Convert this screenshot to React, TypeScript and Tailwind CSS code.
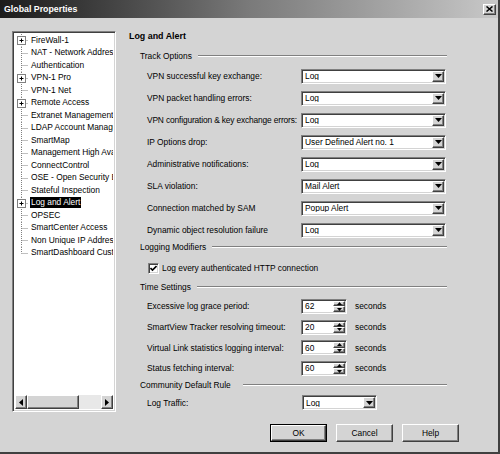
import React from "react";

const raised =
  "bg-[#d4d4d4] border border-t-white border-l-white border-b-[#404040] border-r-[#404040] shadow-[inset_-1px_-1px_0_#808080]";
const sunken =
  "bg-white border border-t-[#808080] border-l-[#808080] border-b-white border-r-white shadow-[inset_1px_1px_0_#404040,inset_-1px_-1px_0_#d4d4d4]";

function Tri({ dir }: { dir: "down" | "up" | "left" | "right" }) {
  const d =
    dir === "down"
      ? "M0 0H7L3.5 4Z"
      : dir === "up"
      ? "M0 4H7L3.5 0Z"
      : dir === "left"
      ? "M4 0V7L0 3.5Z"
      : "M0 0V7L4 3.5Z";
  const w = dir === "down" || dir === "up" ? 7 : 4;
  const h = dir === "down" || dir === "up" ? 4 : 7;
  return (
    <svg width={w} height={h} viewBox={`0 0 ${w} ${h}`}>
      <path d={d} fill="#000" />
    </svg>
  );
}

function Select({ value, wide = true }: { value: string; wide?: boolean }) {
  return (
    <div className={`${wide ? "w-[145px]" : "w-[75px]"} h-[15px] shrink-0 flex items-center p-[1px] ${sunken}`}>
      <span className="flex-1 pl-[2px] leading-none whitespace-nowrap overflow-hidden">{value}</span>
      <div className={`w-[12px] h-[11px] flex items-center justify-center ${raised}`}>
        <Tri dir="down" />
      </div>
    </div>
  );
}

function Spinner({ value }: { value: string }) {
  return (
    <div className={`w-[46px] h-[15px] shrink-0 flex items-center p-[1px] ${sunken}`}>
      <span className="flex-1 pl-[2px] leading-none">{value}</span>
      <div className="w-[12px] h-[11px] flex flex-col">
        <div className={`flex-1 flex items-center justify-center ${raised}`}>
          <svg width="5" height="3" viewBox="0 0 5 3"><path d="M0 3H5L2.5 0Z" fill="#000" /></svg>
        </div>
        <div className={`flex-1 flex items-center justify-center ${raised}`}>
          <svg width="5" height="3" viewBox="0 0 5 3"><path d="M0 0H5L2.5 3Z" fill="#000" /></svg>
        </div>
      </div>
    </div>
  );
}

function Group({ title, gap = "ml-[6px]" }: { title: string; gap?: string }) {
  return (
    <div className="flex items-center h-[12px] pl-[11px] w-[318px]">
      <span className="whitespace-nowrap leading-none">{title}</span>
      <div className={`flex-1 ${gap} h-[2px] border-t border-t-[#808080] border-b border-b-white`} />
    </div>
  );
}

const treeItems: { label: string; plus?: boolean; sel?: boolean }[] = [
  { label: "FireWall-1", plus: true },
  { label: "NAT - Network Address Translation" },
  { label: "Authentication" },
  { label: "VPN-1 Pro", plus: true },
  { label: "VPN-1 Net" },
  { label: "Remote Access", plus: true },
  { label: "Extranet Management Interface" },
  { label: "LDAP Account Management" },
  { label: "SmartMap" },
  { label: "Management High Availability" },
  { label: "ConnectControl" },
  { label: "OSE - Open Security Extension" },
  { label: "Stateful Inspection" },
  { label: "Log and Alert", plus: true, sel: true },
  { label: "OPSEC" },
  { label: "SmartCenter Access" },
  { label: "Non Unique IP Address Ranges" },
  { label: "SmartDashboard Customization" },
];

function TreeRow({ item, last }: { item: (typeof treeItems)[number]; last: boolean }) {
  return (
    <div className="h-[12.5px] flex items-center whitespace-nowrap">
      <svg width="14" height="12.5" viewBox="0 0 14 12.5" className="shrink-0">
        <line x1="6.5" y1="0" x2="6.5" y2={last ? 6.25 : 12.5} stroke="#808080" strokeWidth="1" strokeDasharray="1 1" />
        <line x1="6.5" y1="6.5" x2="13" y2="6.5" stroke="#808080" strokeWidth="1" strokeDasharray="1 1" />
        {item.plus && (
          <g>
            <rect x="2.5" y="2.5" width="8" height="8" fill="#fff" stroke="#808080" />
            <line x1="4.5" y1="6.5" x2="8.5" y2="6.5" stroke="#000" />
            <line x1="6.5" y1="4.5" x2="6.5" y2="8.5" stroke="#000" />
          </g>
        )}
      </svg>
      <span className={`ml-[1px] px-[1px] leading-[11px] ${item.sel ? "bg-black text-white" : ""}`}>{item.label}</span>
    </div>
  );
}

const trackRows: [string, string, boolean?][] = [
  ["VPN successful key exchange:", "Log"],
  ["VPN packet handling errors:", "Log"],
  ["VPN configuration & key exchange errors:", "Log", true],
  ["IP Options drop:", "User Defined Alert no. 1"],
  ["Administrative notifications:", "Log"],
  ["SLA violation:", "Mail Alert"],
  ["Connection matched by SAM", "Popup Alert"],
  ["Dynamic object resolution failure", "Log"],
];

const timeRows: [string, string][] = [
  ["Excessive log grace period:", "62"],
  ["SmartView Tracker resolving timeout:", "20"],
  ["Virtual Link statistics logging interval:", "60"],
  ["Status fetching interval:", "60"],
];

function Btn({ label, def }: { label: string; def?: boolean }) {
  return (
    <div className={`w-[57px] h-[18px] ${def ? "border border-black" : ""}`}>
      <div className={`w-full h-full flex items-center justify-center leading-none ${raised}`}>{label}</div>
    </div>
  );
}

export default function App() {
  return (
    <div className="w-[500px] h-[454px] bg-[#d4d4d4] text-black text-[8.4px] font-['Liberation_Sans',Arial,sans-serif] flex flex-col border-r-2 border-b-2 border-r-[#404040] border-b-[#404040] overflow-hidden">
      <div className="h-[18px] shrink-0 flex items-center pl-[4px] pr-[2px] bg-gradient-to-r from-[#1c1c1c] via-[#7a7a7a] to-[#c8c8c8]">
        <span className="flex-1 text-white font-bold text-[8.8px] leading-none">Global Properties</span>
        <div className={`w-[13px] h-[11px] flex items-center justify-center ${raised}`}>
          <svg width="7" height="6" viewBox="0 0 7 6">
            <path d="M0.5 0.5L6.5 5.5M6.5 0.5L0.5 5.5" stroke="#000" strokeWidth="1.5" />
          </svg>
        </div>
      </div>
      <div className="flex pt-[13px] pl-[12px]">
        <div className={`w-[104px] h-[381px] flex flex-col p-[2px] overflow-hidden ${sunken}`}>
          <div className="flex-1 overflow-hidden">
            {treeItems.map((it, i) => (
              <TreeRow key={it.label} item={it} last={i === treeItems.length - 1} />
            ))}
          </div>
          <div className="h-[14px] flex bg-[#e8e8e8]">
            <div className={`w-[12px] h-full flex items-center justify-center ${raised}`}>
              <Tri dir="left" />
            </div>
            <div className={`w-[52px] h-full ${raised}`} />
            <div className="flex-1" />
            <div className={`w-[12px] h-full flex items-center justify-center ${raised}`}>
              <Tri dir="right" />
            </div>
          </div>
        </div>
        <div className="ml-[13px] w-[330px] flex flex-col">
          <div className="h-[11px] font-bold text-[8.9px] leading-[11px]">Log and Alert</div>
          <div className="mt-[8px]">
            <Group title="Track Options" />
          </div>
          <div className="mt-[3px] flex flex-col">
            {trackRows.map(([l, v, tight]) => (
              <div key={l} className="h-[22px] flex items-center pl-[18px]">
                <span className={`w-[154px] shrink-0 whitespace-nowrap leading-none ${tight ? "tracking-[-0.15px]" : ""}`}>{l}</span>
                <Select value={v} />
              </div>
            ))}
          </div>
          <Group title="Logging Modifiers" />
          <div className="mt-[7px] h-[16px] flex items-center pl-[19px]">
            <div className={`w-[11px] h-[11px] flex items-center justify-center ${sunken}`}>
              <svg width="7" height="7" viewBox="0 0 7 7">
                <path d="M0.5 3L2.5 5L6.5 1" stroke="#000" strokeWidth="1.6" fill="none" />
              </svg>
            </div>
            <span className="ml-[3px] leading-none">Log every authenticated HTTP connection</span>
          </div>
          <div className="mt-[5px]">
            <Group title="Time Settings" />
          </div>
          <div className="mt-[3px] flex flex-col">
            {timeRows.map(([l, v]) => (
              <div key={l} className="h-[20.7px] flex items-center pl-[18px]">
                <span className="w-[154px] shrink-0 whitespace-nowrap leading-none">{l}</span>
                <Spinner value={v} />
                <span className="ml-[8px] leading-none">seconds</span>
              </div>
            ))}
          </div>
          <Group title="Community Default Rule" gap="ml-[12px]" />
          <div className="mt-[4px] h-[16px] flex items-center pl-[18px]">
            <span className="w-[155px] shrink-0 leading-none">Log Traffic:</span>
            <Select value="Log" wide={false} />
          </div>
          <div className="mt-[13px] flex justify-end gap-[9px]">
            <Btn label="OK" def />
            <Btn label="Cancel" />
            <Btn label="Help" />
          </div>
        </div>
      </div>
    </div>
  );
}
